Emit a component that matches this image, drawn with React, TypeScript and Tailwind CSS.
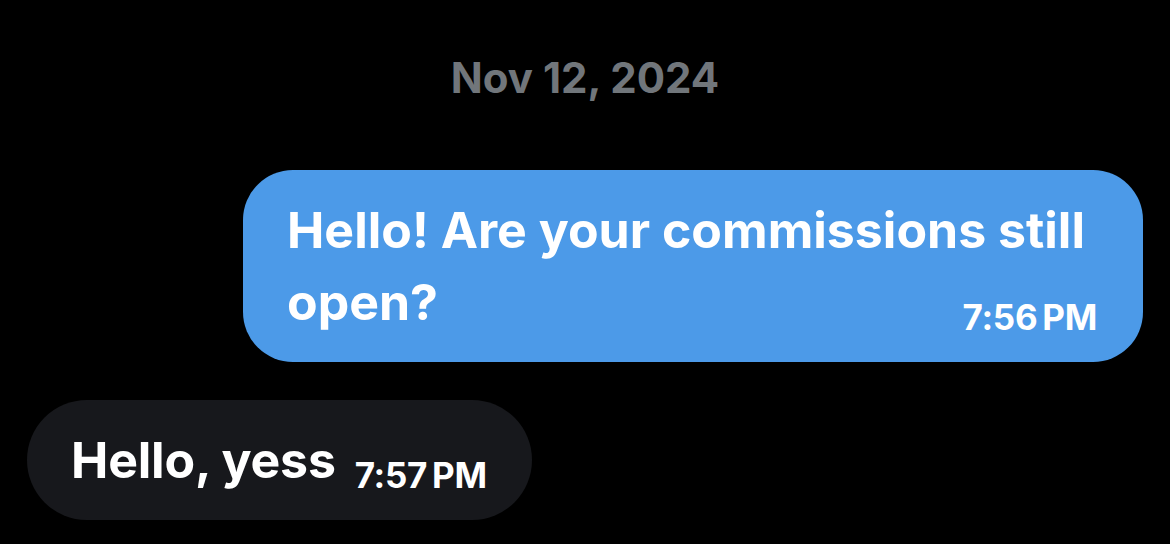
export default function App() {
    return (
        <div
            className="flex h-[544px] w-full flex-col bg-black text-white"
            style={{ fontFamily: 'Inter, "Noto Sans", sans-serif' }}
        >
            <div className="pt-[57px] text-center text-[42px] font-bold leading-none text-[#71767b]">
                Nov 12, 2024
            </div>

            <div className="mt-[71px] mr-[27px] flex justify-end">
                <div className="flex w-[900px] flex-col rounded-[50px] bg-[#4c9ae8] pt-[24px] pr-[46px] pb-[24px] pl-[44px] font-bold">
                    <div className="text-[50px] leading-[72px]">
                        Hello! Are your commissions still
                    </div>
                    <div className="flex items-start justify-between">
                        <span className="text-[50px] leading-[72px]">open?</span>
                        <span className="mt-[34px] text-[35px] leading-none tracking-[-0.3px] [word-spacing:-3px]">
                            7:56 PM
                        </span>
                    </div>
                </div>
            </div>

            <div className="mt-[38px] ml-[27px] flex">
                <div className="flex h-[120px] items-center gap-[19px] rounded-full bg-[#17181c] pr-[45px] pl-[44px] font-bold">
                    <span className="text-[50px] leading-none tracking-[-0.2px]">
                        Hello, yess
                    </span>
                    <span className="mt-[31px] text-[35px] leading-none tracking-[-0.3px] [word-spacing:-3px]">
                        7:57 PM
                    </span>
                </div>
            </div>
        </div>
    )
}
